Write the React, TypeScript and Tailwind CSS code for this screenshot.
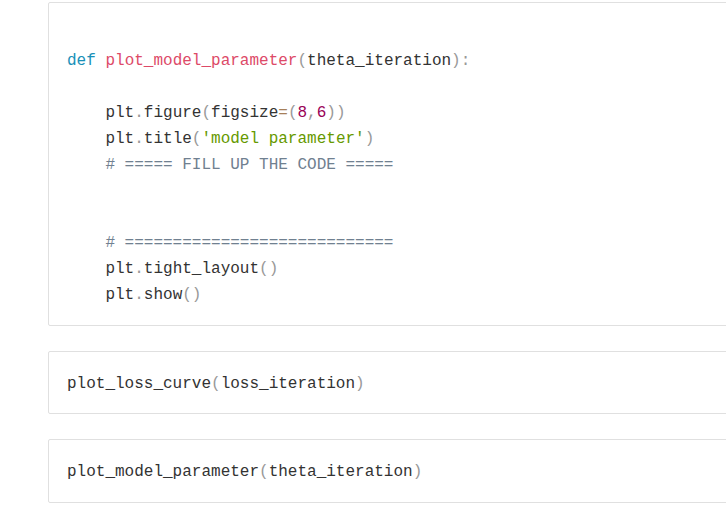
const mono = "font-['Liberation_Mono','DejaVu_Sans_Mono',monospace] text-[16px] leading-[26px] text-[#333]"

function P({ children }: { children: React.ReactNode }) {
  return <span className="text-[#999]">{children}</span>
}

function Cell({ children, className = "" }: { children: React.ReactNode; className?: string }) {
  return (
    <div className={`w-[700px] border border-[#e0e0e0] rounded-[2px] bg-white pl-[18px] ${className}`}>
      <pre className={`${mono} whitespace-pre`}>{children}</pre>
    </div>
  )
}

export default function App() {
  return (
    <div className="w-[726px] h-[517px] bg-white overflow-hidden pl-[48px] pt-[2px]">
      <Cell className="pt-[19px] pb-[17px]">
        {"\n"}
        <span className="text-[#1990b8]">def</span>{" "}
        <span className="text-[#dd4a68]">plot_model_parameter</span>
        <P>(</P>theta_iteration<P>):</P>
        {"\n\n"}
        {"    plt"}<P>.</P>figure<P>(</P>figsize<span className="text-[#a67f59]">=</span><P>(</P>
        <span className="text-[#990055]">8</span><P>,</P><span className="text-[#990055]">6</span><P>))</P>
        {"\n"}
        {"    plt"}<P>.</P>title<P>(</P><span className="text-[#669900]">'model parameter'</span><P>)</P>
        {"\n"}
        {"    "}<span className="text-[#708090]"># ===== FILL UP THE CODE =====</span>
        {"\n\n\n"}
        {"    "}<span className="text-[#708090]"># ============================</span>
        {"\n"}
        {"    plt"}<P>.</P>tight_layout<P>()</P>
        {"\n"}
        {"    plt"}<P>.</P>show<P>()</P>
      </Cell>
      <Cell className="mt-[25px] pt-[19px] pb-[16px]">
        plot_loss_curve<P>(</P>loss_iteration<P>)</P>
      </Cell>
      <Cell className="mt-[25px] pt-[19px] pb-[17px]">
        plot_model_parameter<P>(</P>theta_iteration<P>)</P>
      </Cell>
    </div>
  )
}
